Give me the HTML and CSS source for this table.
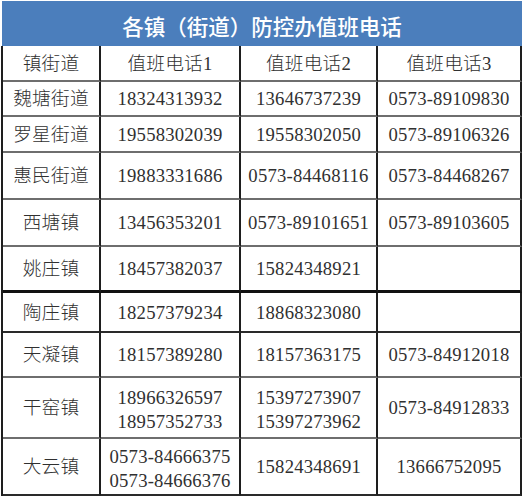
FILE: index.html
```html
<!DOCTYPE html>
<html lang="zh">
<head>
<meta charset="utf-8">
<title>各镇（街道）防控办值班电话</title>
<link rel="stylesheet" href="styles.css">
</head>
<body>
<div class="page">
  <div class="title">各镇（街道）防控办值班电话</div>
  <div class="grid">
    <div class="cell h r-head">镇街道</div>
    <div class="cell h r-head">值班电话1</div>
    <div class="cell h r-head">值班电话2</div>
    <div class="cell h r-head last">值班电话3</div>

    <div class="cell r1">魏塘街道</div>
    <div class="cell r1">18324313932</div>
    <div class="cell r1">13646737239</div>
    <div class="cell r1 last">0573-89109830</div>

    <div class="cell r2">罗星街道</div>
    <div class="cell r2">19558302039</div>
    <div class="cell r2">19558302050</div>
    <div class="cell r2 last">0573-89106326</div>

    <div class="cell r3">惠民街道</div>
    <div class="cell r3">19883331686</div>
    <div class="cell r3">0573-84468116</div>
    <div class="cell r3 last">0573-84468267</div>

    <div class="cell r4">西塘镇</div>
    <div class="cell r4">13456353201</div>
    <div class="cell r4">0573-89101651</div>
    <div class="cell r4 last">0573-89103605</div>

    <div class="cell r5 thick">姚庄镇</div>
    <div class="cell r5 thick">18457382037</div>
    <div class="cell r5 thick">15824348921</div>
    <div class="cell r5 thick last"></div>

    <div class="cell r6 dark">陶庄镇</div>
    <div class="cell r6 dark">18257379234</div>
    <div class="cell r6 dark">18868323080</div>
    <div class="cell r6 dark last"></div>

    <div class="cell r7">天凝镇</div>
    <div class="cell r7">18157389280</div>
    <div class="cell r7">18157363175</div>
    <div class="cell r7 last">0573-84912018</div>

    <div class="cell r8">干窑镇</div>
    <div class="cell r8 multi"><span>18966326597</span><span>18957352733</span></div>
    <div class="cell r8 multi"><span>15397273907</span><span>15397273962</span></div>
    <div class="cell r8 last">0573-84912833</div>

    <div class="cell r9 dark">大云镇</div>
    <div class="cell r9 dark multi"><span>0573-84666375</span><span>0573-84666376</span></div>
    <div class="cell r9 dark">15824348691</div>
    <div class="cell r9 dark last">13666752095</div>
  </div>
</div>
</body>
</html>
```
FILE: styles.css
```css
html, body {
  margin: 0;
  padding: 0;
  background: #ffffff;
}

.page {
  width: 524px;
  height: 500px;
  overflow: hidden;
  font-family: "Liberation Serif", "Noto Sans CJK SC", serif;
  color: #303030;
}

.title {
  margin: 1px 0 0 2px;
  width: 520px;
  height: 45px;
  background: #4b7ebc;
  color: #ffffff;
  font-family: "Noto Sans CJK SC", sans-serif;
  font-size: 21.5px;
  font-weight: 500;
  display: flex;
  align-items: center;
  justify-content: center;
  padding-top: 4px;
  box-sizing: border-box;
}

.grid {
  margin-left: 1px;
  width: 521px;
  border-left: 2px solid #1e1e1e;
  display: grid;
  grid-template-columns: 98px 140px 137px 144px;
  grid-template-rows: 36px 35px 36px 47px 47px 46px 40px 45px 61px 57px;
}

.cell {
  box-sizing: border-box;
  border-right: 2px solid #1e1e1e;
  border-bottom: 2px solid #6e6e6e;
  display: flex;
  align-items: center;
  justify-content: center;
  font-size: 18.7px;
  font-weight: 300;
  line-height: 23.5px;
  letter-spacing: 0.2px;
  white-space: nowrap;
  padding-top: 1px;
}

.cell.thick {
  border-bottom: 3px solid #111111;
}

.cell.dark {
  border-bottom: 2px solid #2a2a2a;
}

.cell.multi {
  flex-direction: column;
  padding-top: 4px;
}

.cell.multi span {
  display: block;
}
```
